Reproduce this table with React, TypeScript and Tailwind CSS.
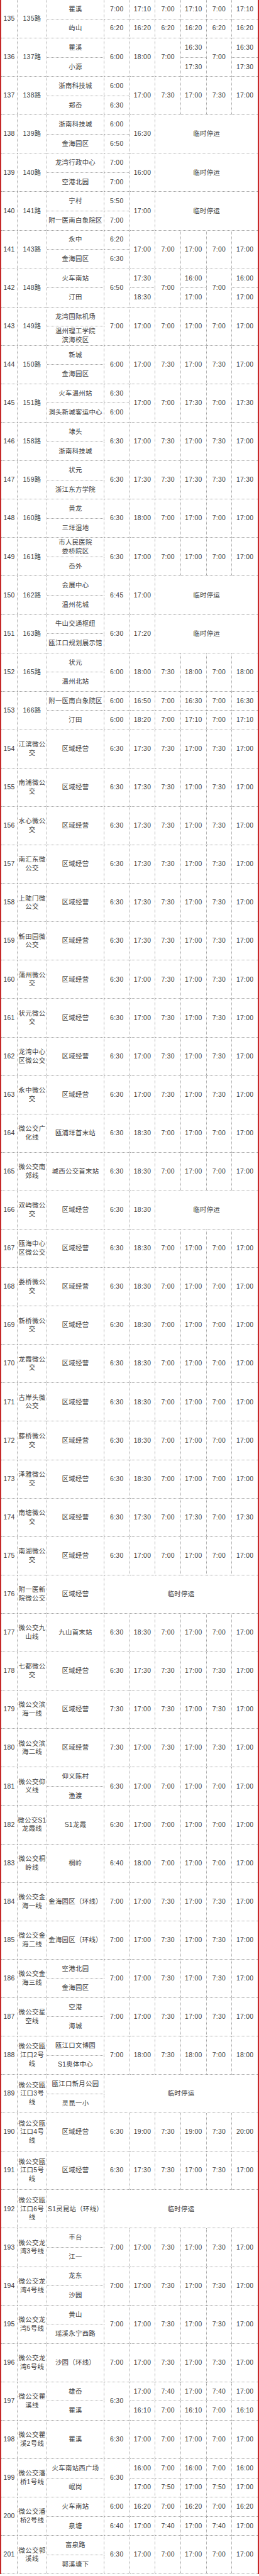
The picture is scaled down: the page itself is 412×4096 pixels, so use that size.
import React from 'react';

type Col = string | [string, string];
type Route = { no: number; name: string[]; st: string[][]; cols: Col[]; stop?: number };

const std = (a: string, b: string, c: string, d: string, e: string, f: string): Col[] => [a, b, c, d, e, f];
const zone = [['区域经营']];

const routes: Route[] = [
  { no: 135, name: ['135路'], st: [['瞿溪'], ['屿山']], cols: [['7:00', '6:20'], ['17:10', '16:20'], ['7:00', '6:20'], ['17:10', '16:20'], ['7:00', '6:20'], ['17:10', '16:20']] },
  { no: 136, name: ['137路'], st: [['瞿溪'], ['小源']], cols: ['6:00', '18:00', '7:00', ['16:30', '17:30'], '7:00', ['16:30', '17:30']] },
  { no: 137, name: ['138路'], st: [['浙南科技城'], ['郑岙']], cols: [['6:00', '6:30'], '17:00', '7:30', '17:00', '7:30', '17:00'] },
  { no: 138, name: ['139路'], st: [['浙南科技城'], ['金海园区']], cols: [['6:00', '6:50'], '16:30'], stop: 4 },
  { no: 139, name: ['140路'], st: [['龙湾行政中心'], ['空港北园']], cols: [['7:00', '7:00'], '16:00'], stop: 4 },
  { no: 140, name: ['141路'], st: [['宁村'], ['附一医南白象院区']], cols: [['5:50', '7:00'], '17:00'], stop: 4 },
  { no: 141, name: ['143路'], st: [['永中'], ['金海园区']], cols: [['6:20', '6:30'], '17:00', '7:00', '17:00', '7:00', '17:00'] },
  { no: 142, name: ['148路'], st: [['火车南站'], ['汀田']], cols: ['6:50', ['17:30', '18:30'], '7:00', ['16:00', '17:00'], '7:00', ['16:00', '17:00']] },
  { no: 143, name: ['149路'], st: [['龙湾国际机场'], ['温州理工学院', '滨海校区']], cols: std('7:00', '17:00', '7:00', '17:00', '7:00', '17:00') },
  { no: 144, name: ['150路'], st: [['新城'], ['金海园区']], cols: std('6:00', '17:00', '7:30', '17:00', '7:30', '17:00') },
  { no: 145, name: ['151路'], st: [['火车温州站'], ['洞头新城客运中心']], cols: [['6:30', '6:00'], '17:00', '7:00', '17:30', '7:00', '17:30'] },
  { no: 146, name: ['158路'], st: [['埭头'], ['浙南科技城']], cols: std('6:30', '17:00', '7:30', '17:00', '7:30', '17:00') },
  { no: 147, name: ['159路'], st: [['状元'], ['浙江东方学院']], cols: std('6:30', '17:30', '7:30', '17:30', '7:30', '17:30') },
  { no: 148, name: ['160路'], st: [['黄龙'], ['三垟湿地']], cols: std('6:30', '18:00', '7:00', '17:00', '7:00', '17:00') },
  { no: 149, name: ['161路'], st: [['市人民医院', '娄桥院区'], ['岙外']], cols: std('6:30', '17:00', '7:00', '17:00', '7:00', '17:00') },
  { no: 150, name: ['162路'], st: [['会展中心'], ['温州花城']], cols: ['6:45', '17:00'], stop: 4 },
  { no: 151, name: ['163路'], st: [['牛山交通枢纽'], ['瓯江口规划展示馆']], cols: ['6:30', '17:20'], stop: 4 },
  { no: 152, name: ['165路'], st: [['状元'], ['温州北站']], cols: std('6:00', '18:00', '7:30', '18:00', '7:00', '18:00') },
  { no: 153, name: ['166路'], st: [['附一医南白象院区'], ['汀田']], cols: [['6:00', '6:00'], ['16:50', '18:20'], ['7:00', '7:00'], ['16:30', '17:10'], ['7:00', '7:00'], ['16:30', '17:10']] },
  { no: 154, name: ['江滨微公', '交'], st: zone, cols: std('6:30', '17:30', '7:30', '17:00', '7:30', '17:00') },
  { no: 155, name: ['南浦微公', '交'], st: zone, cols: std('6:30', '17:30', '7:30', '17:00', '7:30', '17:00') },
  { no: 156, name: ['水心微公', '交'], st: zone, cols: std('6:30', '17:30', '7:30', '17:00', '7:30', '17:00') },
  { no: 157, name: ['南汇东微', '公交'], st: zone, cols: std('6:30', '17:30', '7:30', '17:00', '7:30', '17:00') },
  { no: 158, name: ['上陡门微', '公交'], st: zone, cols: std('6:30', '17:30', '7:30', '17:00', '7:30', '17:00') },
  { no: 159, name: ['新田园微', '公交'], st: zone, cols: std('6:30', '17:30', '7:30', '17:00', '7:30', '17:00') },
  { no: 160, name: ['蒲州微公', '交'], st: zone, cols: std('6:30', '17:00', '7:30', '17:00', '7:30', '17:00') },
  { no: 161, name: ['状元微公', '交'], st: zone, cols: std('6:30', '17:00', '7:30', '17:00', '7:30', '17:00') },
  { no: 162, name: ['龙湾中心', '区微公交'], st: zone, cols: std('6:30', '17:00', '7:30', '17:00', '7:30', '17:00') },
  { no: 163, name: ['永中微公', '交'], st: zone, cols: std('6:30', '17:00', '7:30', '17:00', '7:30', '17:00') },
  { no: 164, name: ['微公交广', '化线'], st: [['瓯浦垟首末站']], cols: std('6:30', '18:30', '7:00', '17:00', '7:00', '17:00') },
  { no: 165, name: ['微公交南', '郊线'], st: [['城西公交首末站']], cols: std('6:30', '18:30', '7:00', '17:00', '7:00', '17:00') },
  { no: 166, name: ['双屿微公', '交'], st: zone, cols: ['6:30', '18:30'], stop: 4 },
  { no: 167, name: ['瓯海中心', '区微公交'], st: zone, cols: std('6:30', '18:30', '7:00', '17:00', '7:00', '17:00') },
  { no: 168, name: ['娄桥微公', '交'], st: zone, cols: std('6:30', '18:30', '7:00', '17:00', '7:00', '17:00') },
  { no: 169, name: ['新桥微公', '交'], st: zone, cols: std('6:30', '18:30', '7:00', '17:00', '7:00', '17:00') },
  { no: 170, name: ['龙霞微公', '交'], st: zone, cols: std('6:30', '18:30', '7:00', '17:00', '7:00', '17:00') },
  { no: 171, name: ['古岸头微', '公交'], st: zone, cols: std('6:30', '18:30', '7:00', '17:00', '7:00', '17:00') },
  { no: 172, name: ['藤桥微公', '交'], st: zone, cols: std('6:30', '18:30', '7:00', '17:00', '7:00', '17:00') },
  { no: 173, name: ['泽雅微公', '交'], st: zone, cols: std('6:30', '18:30', '7:00', '17:00', '7:00', '17:00') },
  { no: 174, name: ['南塘微公', '交'], st: zone, cols: std('6:30', '17:30', '7:00', '17:30', '7:00', '17:30') },
  { no: 175, name: ['南湖微公', '交'], st: zone, cols: std('6:30', '17:00', '7:00', '17:00', '7:00', '17:00') },
  { no: 176, name: ['附一医新', '院微公交'], st: zone, cols: [], stop: 6 },
  { no: 177, name: ['微公交九', '山线'], st: [['九山首末站']], cols: std('6:30', '18:30', '7:00', '17:00', '7:00', '17:00') },
  { no: 178, name: ['七都微公', '交'], st: zone, cols: std('6:30', '17:30', '7:30', '17:00', '7:30', '17:00') },
  { no: 179, name: ['微公交滨', '海一线'], st: zone, cols: std('7:30', '17:00', '7:30', '17:00', '7:30', '17:00') },
  { no: 180, name: ['微公交滨', '海二线'], st: zone, cols: std('7:30', '17:00', '7:30', '17:00', '7:30', '17:00') },
  { no: 181, name: ['微公交仰', '义线'], st: [['仰义陈村'], ['渔渡']], cols: std('6:30', '17:00', '7:00', '17:00', '7:00', '17:00') },
  { no: 182, name: ['微公交S1', '龙霞线'], st: [['S1龙霞']], cols: std('6:30', '17:00', '7:00', '17:00', '7:00', '17:00') },
  { no: 183, name: ['微公交桐', '岭线'], st: [['桐岭']], cols: std('6:40', '18:00', '7:00', '17:00', '7:00', '17:00') },
  { no: 184, name: ['微公交金', '海一线'], st: [['金海园区（环线）']], cols: std('7:00', '17:00', '7:30', '17:00', '7:30', '17:00') },
  { no: 185, name: ['微公交金', '海二线'], st: [['金海园区（环线）']], cols: std('7:00', '17:00', '7:30', '17:00', '7:30', '17:00') },
  { no: 186, name: ['微公交金', '海三线'], st: [['空港北园'], ['金海园区']], cols: std('7:00', '17:00', '7:30', '17:00', '7:30', '17:00') },
  { no: 187, name: ['微公交星', '空线'], st: [['空港'], ['海城']], cols: std('7:00', '17:00', '7:30', '17:00', '7:30', '17:00') },
  { no: 188, name: ['微公交瓯', '江口2号', '线'], st: [['瓯江口文博园'], ['S1奥体中心']], cols: std('7:00', '18:00', '7:30', '18:00', '7:00', '18:00') },
  { no: 189, name: ['微公交瓯', '江口3号', '线'], st: [['瓯江口新月公园'], ['灵昆一小']], cols: [], stop: 6 },
  { no: 190, name: ['微公交瓯', '江口4号', '线'], st: zone, cols: std('6:30', '19:00', '7:30', '19:00', '7:30', '20:00') },
  { no: 191, name: ['微公交瓯', '江口5号', '线'], st: zone, cols: std('6:30', '17:30', '7:30', '17:00', '7:30', '17:00') },
  { no: 192, name: ['微公交瓯', '江口6号', '线'], st: [['S1灵昆站（环线）']], cols: [], stop: 6 },
  { no: 193, name: ['微公交龙', '湾3号线'], st: [['丰台'], ['江一']], cols: std('7:00', '17:00', '7:30', '17:00', '7:30', '17:00') },
  { no: 194, name: ['微公交龙', '湾4号线'], st: [['龙东'], ['沙园']], cols: std('7:00', '17:00', '7:30', '17:00', '7:30', '17:00') },
  { no: 195, name: ['微公交龙', '湾5号线'], st: [['黄山'], ['瑶溪永宁西路']], cols: std('7:00', '17:00', '7:30', '17:00', '7:30', '17:00') },
  { no: 196, name: ['微公交龙', '湾6号线'], st: [['沙园（环线）']], cols: std('7:00', '17:00', '7:30', '17:00', '7:30', '17:00') },
  { no: 197, name: ['微公交瞿', '溪线'], st: [['雄岙'], ['瞿溪']], cols: ['6:30', ['17:00', '16:10'], ['7:40', '7:00'], ['17:00', '16:10'], ['7:40', '7:00'], ['17:00', '16:10']] },
  { no: 198, name: ['微公交瞿', '溪2号线'], st: [['瞿溪']], cols: std('6:30', '17:00', '7:00', '17:00', '7:00', '17:00') },
  { no: 199, name: ['微公交潘', '桥1号线'], st: [['火车南站西广场'], ['岷岗']], cols: ['6:30', ['16:00', '17:00'], ['7:00', '7:50'], ['16:00', '17:00'], ['7:00', '7:50'], ['16:00', '17:00']] },
  { no: 200, name: ['微公交潘', '桥2号线'], st: [['火车南站'], ['泉塘']], cols: [['6:00', '6:40'], ['16:20', '17:00'], ['7:00', '7:40'], ['16:20', '17:00'], ['7:00', '7:40'], ['16:20', '17:00']] },
  { no: 201, name: ['微公交郭', '溪线'], st: [['富泉路'], ['郭溪塘下']], cols: std('6:30', '17:00', '7:00', '17:00', '7:00', '17:00') },
];

const base = 'flex flex-col items-center justify-center text-center whitespace-nowrap border-b border-dotted border-[#a3a3a3]';

function Cell({ lines, tall, last, wide }: { lines: string[]; tall?: boolean; last?: boolean; wide?: 4 | 6 }) {
  return (
    <div
      className={clsx(
        base,
        tall && 'row-span-2',
        wide === 4 && 'col-span-4',
        wide === 6 && 'col-span-6',
        last ? 'border-r-0' : 'border-r'
      )}
    >
      {lines.map((l, i) => (
        <div key={i}>{l}</div>
      ))}
    </div>
  );
}

function clsx(...parts: (string | false | undefined)[]) {
  return parts.filter(Boolean).join(' ');
}

function RouteCells({ r }: { r: Route }) {
  const two = r.st.length === 2;
  const n = r.cols.length;
  const top = (
    <>
      <Cell tall lines={[String(r.no)]} />
      <Cell tall lines={r.name} />
      <Cell tall={!two} lines={r.st[0]} />
      {r.cols.map((c, i) =>
        typeof c === 'string' ? (
          <Cell key={'a' + i} tall lines={[c]} last={!r.stop && i === n - 1} />
        ) : (
          <Cell key={'a' + i} lines={[c[0]]} last={!r.stop && i === n - 1} />
        )
      )}
      {r.stop ? <Cell tall wide={r.stop as 4 | 6} lines={['临时停运']} last /> : null}
    </>
  );
  const bottom = (
    <>
      {two ? <Cell lines={r.st[1]} /> : null}
      {r.cols.map((c, i) =>
        typeof c === 'string' ? null : <Cell key={'b' + i} lines={[c[1]]} last={!r.stop && i === n - 1} />
      )}
    </>
  );
  return (
    <>
      {top}
      {bottom}
    </>
  );
}

export default function App() {
  return (
    <div className="w-[412px] bg-white border-x-2 border-[#c62828]">
      <div className="grid grid-cols-[26px_47px_91px_repeat(6,minmax(0,1fr))] auto-rows-[30.56px] text-[10.4px] leading-[13.7px] text-[#3d3d3d] font-['Liberation_Sans','Noto_Sans_CJK_SC',sans-serif] tracking-[0.3px]">
        {routes.map(r => (
          <RouteCells key={r.no} r={r} />
        ))}
      </div>
    </div>
  );
}
